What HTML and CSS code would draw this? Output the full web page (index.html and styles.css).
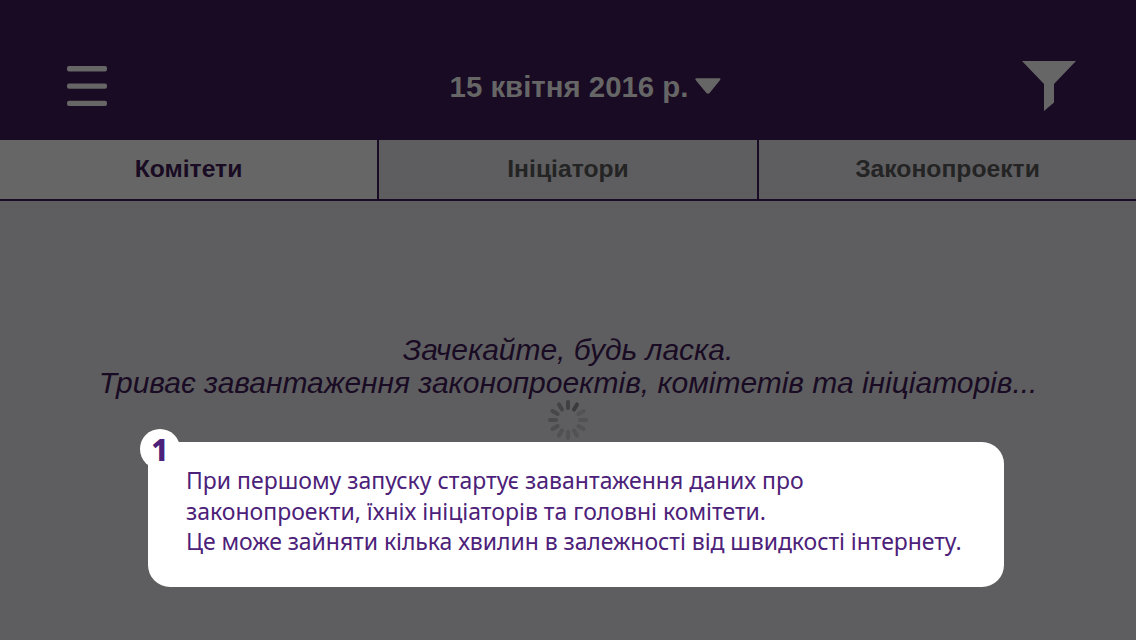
FILE: index.html
```html
<!DOCTYPE html>
<html lang="uk">
<head>
<meta charset="utf-8">
<title>Законопроекти</title>
<link rel="stylesheet" href="styles.css">
</head>
<body>
<div class="app">
  <header class="bar">
    <svg class="menu" width="40" height="42" viewBox="0 0 40 42"><rect y="1" width="40" height="5.4" rx="2"/><rect y="18.4" width="40" height="5.4" rx="2"/><rect y="35.8" width="40" height="5.2" rx="2"/></svg>
    <div class="date"><span class="date-text">15 квітня 2016 р.</span><svg class="caret" width="26" height="16" viewBox="0 0 26 16"><path d="M1.5.3h23q1.6.2.6 1.6L14.6 15q-1.6 1.6-3.2 0L.6 1.9Q-.2.5 1.5.3z"/></svg></div>
    <svg class="filter" width="54" height="50" viewBox="0 0 54 50"><path d="M0 0H54L32 23V41.500L22 50V23z"/></svg>
  </header>
  <nav class="tabs">
    <div class="tab active"><span>Комітети</span></div>
    <div class="tab"><span>Ініціатори</span></div>
    <div class="tab last"><span>Законопроекти</span></div>
  </nav>
  <main class="content">
    <p class="wait">Зачекайте, будь ласка.</p>
    <p class="wait second">Триває завантаження законопроектів, комітетів та ініціаторів...</p>
    <svg class="spinner" width="40" height="40" viewBox="-20 -20 40 40">
      <g stroke-width="4" stroke-linecap="round">
        <path d="M0-18V-12" stroke="#404041"/>
        <path d="M0-18V-12" stroke="#3b3b3c" transform="rotate(30)"/>
        <path d="M0-18V-12" stroke="#535354" transform="rotate(60)"/>
        <path d="M0-18V-12" stroke="#525253" transform="rotate(90)"/>
        <path d="M0-18V-12" stroke="#525253" transform="rotate(120)"/>
        <path d="M0-18V-12" stroke="#525253" transform="rotate(150)"/>
        <path d="M0-18V-12" stroke="#525253" transform="rotate(180)"/>
        <path d="M0-18V-12" stroke="#505051" transform="rotate(210)"/>
        <path d="M0-18V-12" stroke="#4d4d4e" transform="rotate(240)"/>
        <path d="M0-18V-12" stroke="#4a4a4b" transform="rotate(270)"/>
        <path d="M0-18V-12" stroke="#474748" transform="rotate(300)"/>
        <path d="M0-18V-12" stroke="#444445" transform="rotate(330)"/>
      </g>
    </svg>
    <section class="hint">
      <div class="badge">1</div>
      <p class="line l1">При першому запуску стартує завантаження даних про</p>
      <p class="line l2">законопроекти, їхніх ініціаторів та головні комітети.</p>
      <p class="line l3">Це може зайняти кілька хвилин в залежності від швидкості інтернету.</p>
    </section>
  </main>
</div>
</body>
</html>
```
FILE: styles.css
```css
* { box-sizing: border-box; }
body, p { margin: 0; }
body { font-family: "Liberation Sans", Arial, sans-serif; background: #5e5e60; }
.app { display: flex; flex-direction: column; width: 1136px; height: 640px; overflow: hidden; }
.bar { display: flex; justify-content: space-between; height: 140px; padding: 61px 60px 0 67px; background: #190b23; fill: #666; }
.menu { margin-top: 4px; }
.date { display: flex; margin-left: 42px; color: #666; font-size: 29.4px; font-weight: bold; line-height: 34px; padding-top: 9px; }
.date-text { white-space: nowrap; }
.caret { margin: 8px 0 0 7px; }
.tabs { display: grid; grid-template-columns: 379px 380px 377px; height: 61px; border-bottom: 2px solid #190b23; }
.tab { display: flex; justify-content: center; padding-top: 15px; border-right: 2px solid #190b23; background: #5e5e60; color: #242424; font-size: 24.7px; font-weight: bold; line-height: 28px; }
.active { background: #666; color: #190b23; }
.last { border-right: 0; }
.content { display: flex; flex-direction: column; align-items: center; padding-top: 132px; }
.wait { color: #190b23; font-size: 30px; font-style: italic; letter-spacing: -.02px; line-height: 33px; white-space: nowrap; }
.spinner { margin-top: 1px; fill: none; }
.hint { position: relative; width: 856px; height: 145px; margin: 2px 0 0 16px; padding: 23px 0 0 38px; border-radius: 22px; background: #fff; color: #4c2179; font-family: "Noto Sans", sans-serif; }
.badge { position: absolute; left: -8px; top: -13px; width: 40px; height: 40px; border-radius: 50%; background: #fff; font-size: 30px; font-weight: 800; line-height: 41px; text-align: center; }
.line { width: max-content; font-size: 23px; line-height: 30.7px; white-space: nowrap; }
.l3 { letter-spacing: -.06px; }
```
